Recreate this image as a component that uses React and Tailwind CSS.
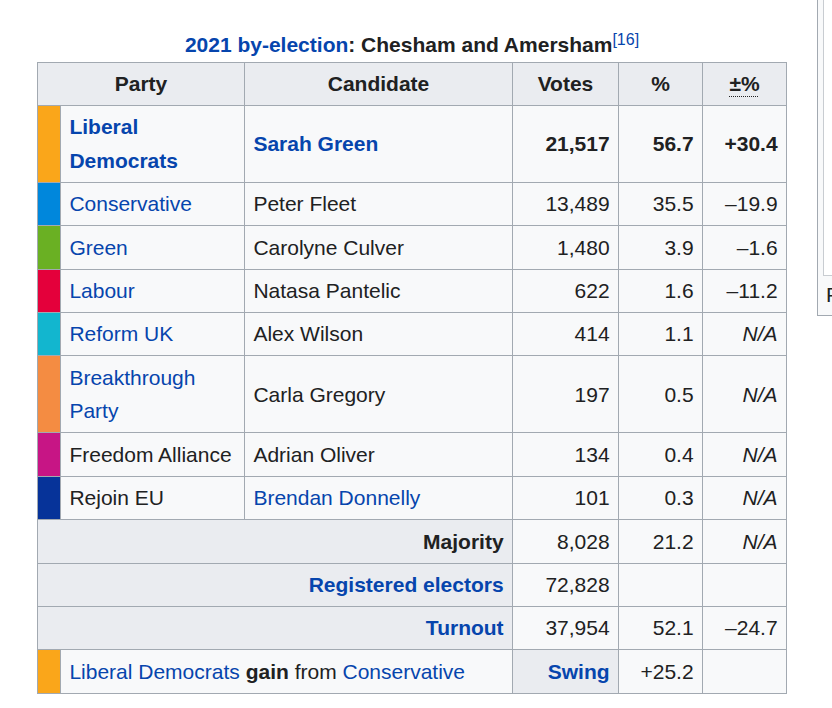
const link = 'text-[#0645ad]';

const rows = [
  { color: '#faa61a', party: 'Liberal Democrats', partyLink: true, cand: 'Sarah Green', candLink: true, votes: '21,517', pct: '56.7', chg: '+30.4', bold: true },
  { color: '#0087dc', party: 'Conservative', partyLink: true, cand: 'Peter Fleet', votes: '13,489', pct: '35.5', chg: '–19.9' },
  { color: '#6ab023', party: 'Green', partyLink: true, cand: 'Carolyne Culver', votes: '1,480', pct: '3.9', chg: '–1.6' },
  { color: '#e4003b', party: 'Labour', partyLink: true, cand: 'Natasa Pantelic', votes: '622', pct: '1.6', chg: '–11.2' },
  { color: '#12b6cf', party: 'Reform UK', partyLink: true, cand: 'Alex Wilson', votes: '414', pct: '1.1', chg: 'N/A' },
  { color: '#f48c42', party: 'Breakthrough Party', partyLink: true, cand: 'Carla Gregory', votes: '197', pct: '0.5', chg: 'N/A' },
  { color: '#c71585', party: 'Freedom Alliance', cand: 'Adrian Oliver', votes: '134', pct: '0.4', chg: 'N/A' },
  { color: '#063399', party: 'Rejoin EU', cand: 'Brendan Donnelly', candLink: true, votes: '101', pct: '0.3', chg: 'N/A' }
];

const cell = 'border border-[#a2a9b1] px-[8.4px] py-[4.4px] leading-[33.6px]';

function Chg({ v }) {
  return v === 'N/A' ? <i>N/A</i> : v;
}

export default function App() {
  return (
    <div className="w-[832px] h-[708px] overflow-hidden bg-white flex items-start font-['Liberation_Sans',Arial,sans-serif] text-[21px] text-[#202122]">
      <div className="ml-[37px] mt-[28px] shrink-0">
        <table className="table-fixed border-collapse w-[749px]">
          <caption className="font-bold leading-[33.6px] text-center">
            <span className={link}>2021 by-election</span>: Chesham and Amersham
            <sup className={`${link} font-normal text-[16px] relative -top-[7px]`}>[16]</sup>
          </caption>
          <colgroup>
            <col className="w-[23px]" />
            <col className="w-[184px]" />
            <col className="w-[268px]" />
            <col className="w-[106px]" />
            <col className="w-[84px]" />
            <col className="w-[84px]" />
          </colgroup>
          <thead>
            <tr className="bg-[#eaecf0]">
              <th colSpan={2} className={cell}>Party</th>
              <th className={cell}>Candidate</th>
              <th className={cell}>Votes</th>
              <th className={cell}>%</th>
              <th className={cell}>
                <span className="underline decoration-dotted decoration-1 underline-offset-[5px]">±%</span>
              </th>
            </tr>
          </thead>
          <tbody className="bg-[#f8f9fa]">
            {rows.map((r) => (
              <tr key={r.party} className={r.bold ? 'font-bold' : ''}>
                <td className="border border-[#a2a9b1] p-0" style={{ background: r.color }} />
                <td className={`${cell} ${r.partyLink ? link : ''}`}>{r.party}</td>
                <td className={`${cell} ${r.candLink ? link : ''}`}>{r.cand}</td>
                <td className={`${cell} text-right`}>{r.votes}</td>
                <td className={`${cell} text-right`}>{r.pct}</td>
                <td className={`${cell} text-right`}><Chg v={r.chg} /></td>
              </tr>
            ))}
            <tr>
              <td colSpan={3} className={`${cell} bg-[#eaecf0] text-right font-bold`}>Majority</td>
              <td className={`${cell} text-right`}>8,028</td>
              <td className={`${cell} text-right`}>21.2</td>
              <td className={`${cell} text-right`}><i>N/A</i></td>
            </tr>
            <tr>
              <td colSpan={3} className={`${cell} bg-[#eaecf0] text-right font-bold ${link}`}>Registered electors</td>
              <td className={`${cell} text-right`}>72,828</td>
              <td className={cell} />
              <td className={cell} />
            </tr>
            <tr>
              <td colSpan={3} className={`${cell} bg-[#eaecf0] text-right font-bold ${link}`}>Turnout</td>
              <td className={`${cell} text-right`}>37,954</td>
              <td className={`${cell} text-right`}>52.1</td>
              <td className={`${cell} text-right`}>–24.7</td>
            </tr>
            <tr>
              <td className="border border-[#a2a9b1] p-0 bg-[#faa61a]" />
              <td colSpan={2} className={`${cell} whitespace-nowrap`}>
                <span className={link}>Liberal Democrats</span> <b>gain</b> from <span className={link}>Conservative</span>
              </td>
              <td className={`${cell} bg-[#eaecf0] text-right font-bold ${link}`}>Swing</td>
              <td className={`${cell} text-right`}>+25.2</td>
              <td className={cell} />
            </tr>
          </tbody>
        </table>
      </div>
      <div className="ml-[30px] shrink-0 w-[300px] h-[316px] border-x border-b border-[#a2a9b1] bg-[#f8f9fa] px-[5px] flex flex-col">
        <div className="h-[276px] border-x border-b border-[#c8ccd1] bg-white" />
        <p className="px-[3px] leading-[33px] mt-[2px]">F</p>
      </div>
    </div>
  );
}
